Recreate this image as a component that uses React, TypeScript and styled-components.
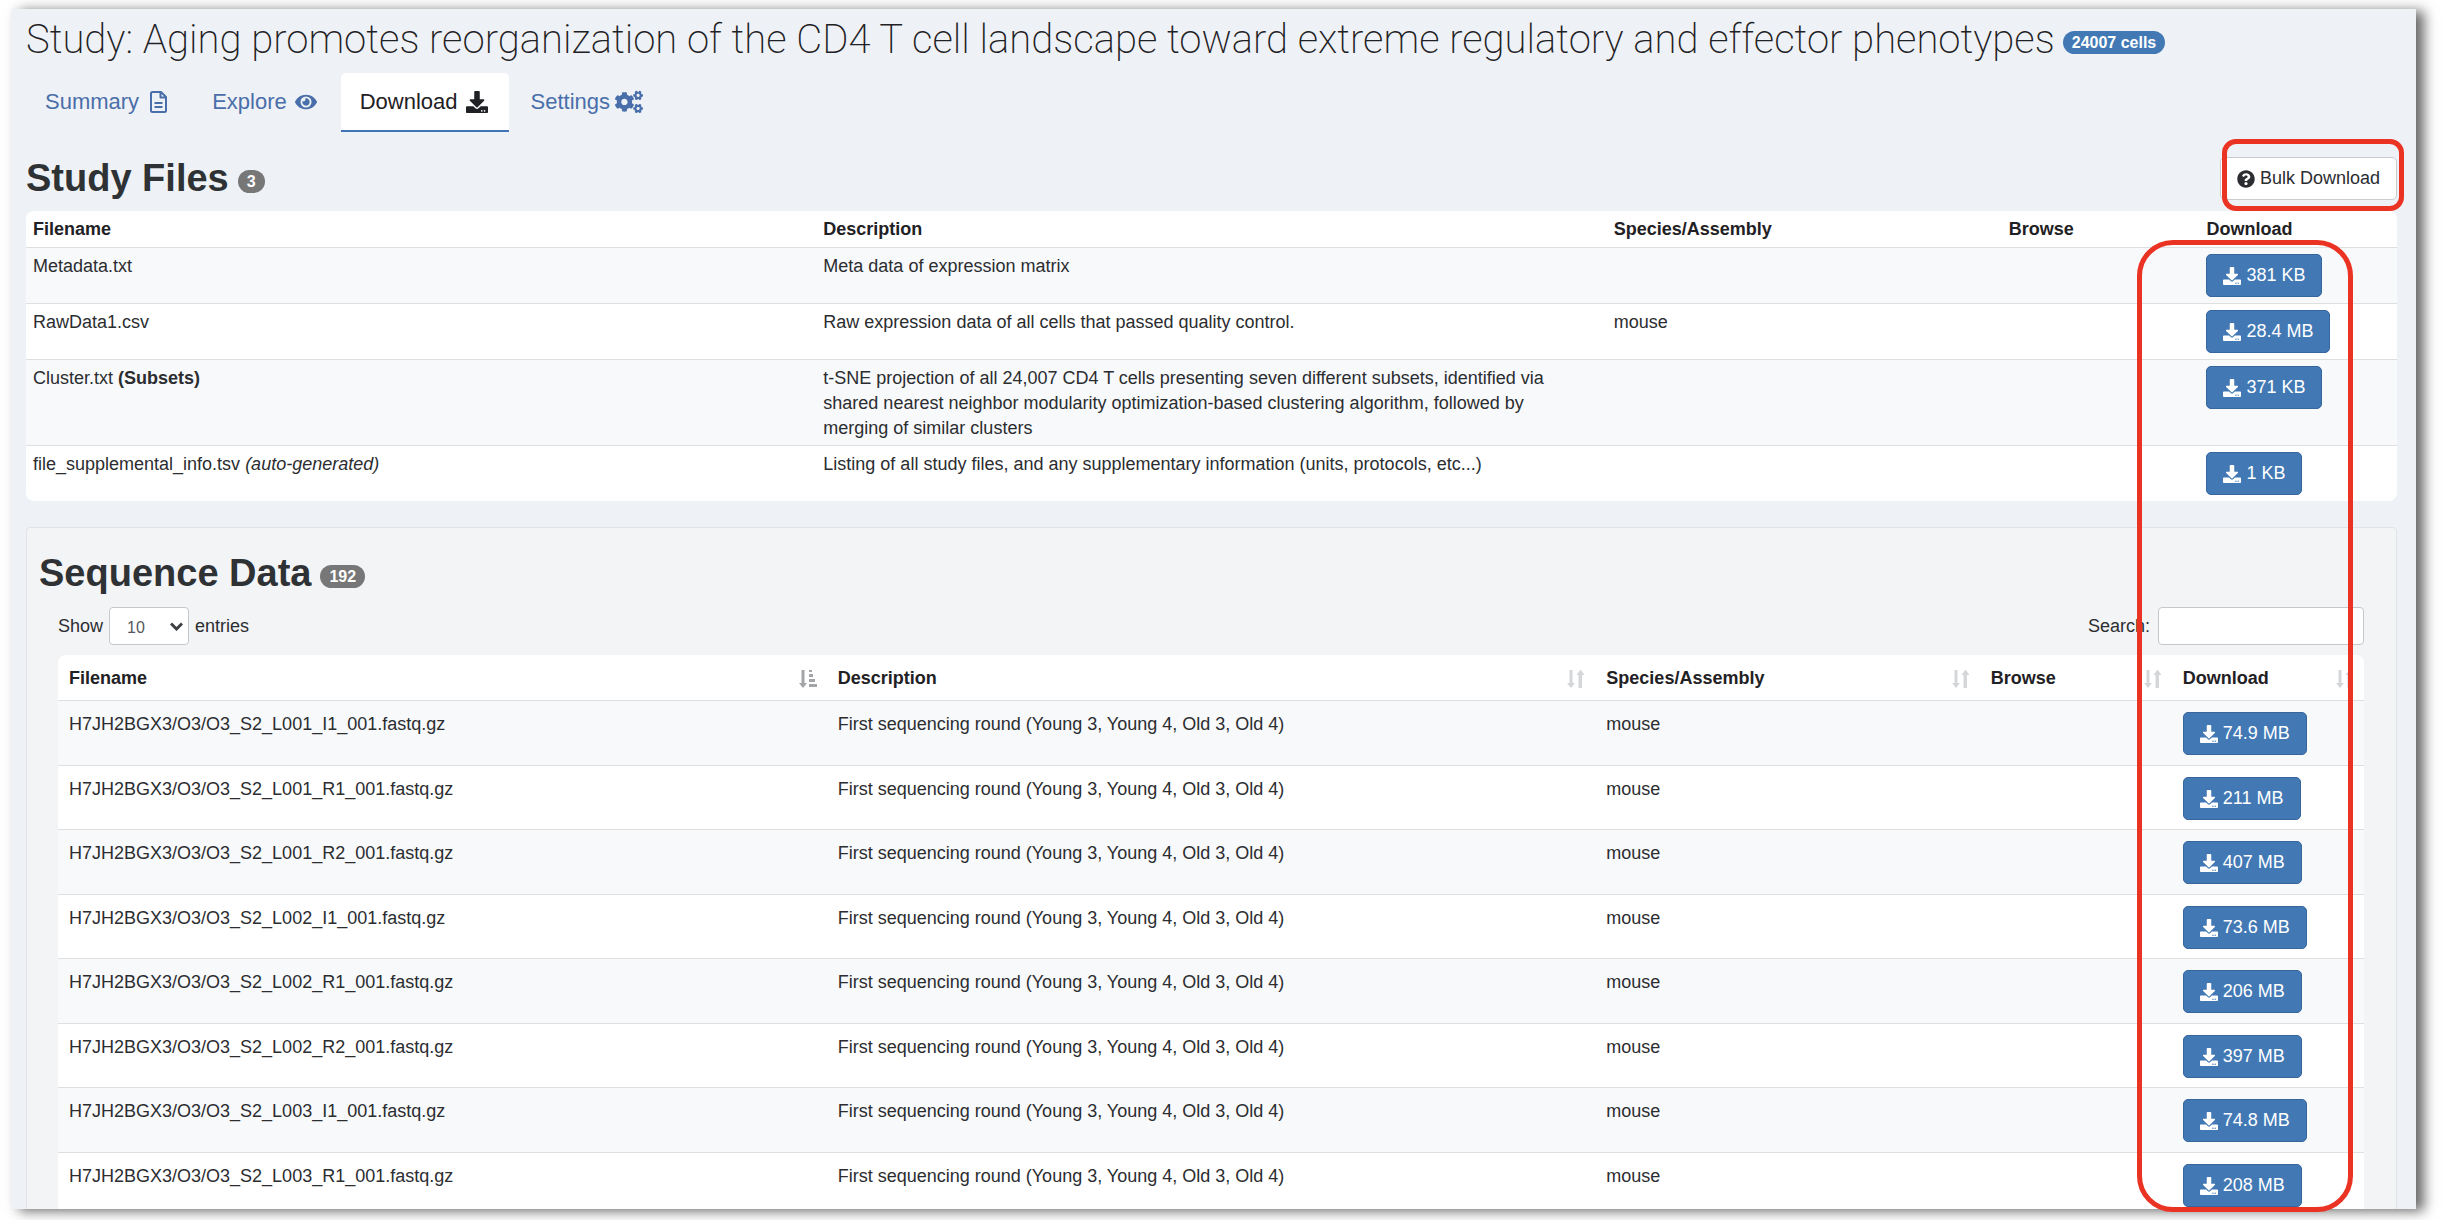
import React from "react";
import styled, { createGlobalStyle } from "styled-components";
import { FaDownload, FaEye, FaCogs, FaQuestionCircle } from "react-icons/fa";

const Global = createGlobalStyle`
  *, *::before, *::after { box-sizing: border-box; }
  body {
    margin: 0;
    background: #fff;
    color: #2b2d30;
    font-family: "Liberation Sans", Arial, sans-serif;
    font-size: 18px;
    line-height: 25px;
  }
`;

const Stage = styled.div`
  position: relative;
  height: 100vh;
  padding: 9px 26px 11px 11px;
  overflow: hidden;
`;

const Page = styled.main`
  height: 100%;
  padding: 0 19px 0 15px;
  overflow: hidden;
  background: #eef2f6;
  box-shadow: 8px 2px 12px rgba(0, 0, 0, 0.6);
`;

const Title = styled.h1`
  display: flex;
  align-items: center;
  gap: 8px;
  margin: 0;
  padding-top: 6px;
  color: #1f2124;
  font-family: Roboto, "Liberation Sans", sans-serif;
  font-size: 40px;
  font-weight: 200;
  line-height: 50px;
  white-space: nowrap;
`;

const Badge = styled.span<{ $tone?: string }>`
  margin-top: 5px;
  padding: 0 9px;
  border-radius: 12px;
  background: ${(p) => p.$tone ?? "#777"};
  color: #fff;
  font-family: "Liberation Sans", Arial, sans-serif;
  font-size: 16px;
  font-weight: 700;
  line-height: 23px;
`;

const Tabs = styled.nav`
  display: flex;
  gap: 3px;
  margin-top: 8px;
`;

const Tab = styled.a<{ $active?: boolean }>`
  display: flex;
  align-items: center;
  gap: 6px;
  height: 59px;
  padding: 0 19px;
  border-bottom: 2px solid ${(p) => (p.$active ? "#3f76b5" : "transparent")};
  border-radius: 5px 5px 0 0;
  background: ${(p) => (p.$active ? "#fff" : "transparent")};
  color: ${(p) => (p.$active ? "#1f2124" : "#4a6ea9")};
  font-size: 22px;
  text-decoration: none;
`;

const TabIcon = styled.span<{ $wide?: boolean }>`
  display: flex;
  justify-content: center;
  width: 26px;
  svg {
    flex: none;
    width: ${(p) => (p.$wide ? "28px" : "auto")};
    height: ${(p) => (p.$wide ? "28px" : "22px")};
  }
`;

const Bar = styled.div`
  display: flex;
  align-items: center;
  justify-content: space-between;
`;

const FilesBar = styled(Bar)`
  margin: 25px 0 11px;
`;

const Heading = styled.h2`
  display: flex;
  align-items: center;
  gap: 9px;
  margin: 0;
  color: #2f3235;
  font-size: 38px;
  font-weight: 700;
  line-height: 43px;
`;

const BulkWrap = styled.div`
  position: relative;
`;

const Button = styled.button<{ $plain?: boolean }>`
  display: inline-flex;
  align-items: center;
  gap: 5px;
  height: 43px;
  padding: 0 16px;
  border: 1px solid ${(p) => (p.$plain ? "#c9ccce" : "#36669b")};
  border-radius: 5px;
  background: ${(p) => (p.$plain ? "#fff" : "#4279b5")};
  color: ${(p) => (p.$plain ? "#2b2d30" : "#fff")};
  font: inherit;
  vertical-align: top;
  white-space: nowrap;
`;

const Callout = styled.div`
  position: absolute;
  border: 5px solid #ea3323;
  pointer-events: none;
`;

const BulkCallout = styled(Callout)`
  inset: -18px -7px -11px 2px;
  border-radius: 14px;
`;

const ColumnCallout = styled(Callout)`
  top: 240px;
  right: 89px;
  bottom: 8px;
  width: 216px;
  border-radius: 36px;
`;

const Table = styled.table<{ $roomy?: boolean }>`
  width: 100%;
  table-layout: fixed;
  border-collapse: separate;
  border-spacing: 0;
  border-radius: 8px;
  overflow: hidden;
  background: #fff;
  th, td {
    padding: ${(p) => (p.$roomy ? "11px 10px 9px 11px" : "6px 16px 4px 7px")};
    text-align: left;
    vertical-align: top;
  }
  th {
    height: ${(p) => (p.$roomy ? 45 : 36)}px;
    color: #1f2124;
  }
  td {
    height: ${(p) => (p.$roomy ? 64 : 56)}px;
    border-top: 1px solid #dddfe1;
  }
  tbody tr:nth-child(odd) { background: #f8f9fb; }
  ${(p) => p.$roomy && "tbody tr:nth-child(odd) td { height: 65px; }"}
`;

const Col = styled.col<{ $share: number }>`
  width: calc(100% * ${(p) => p.$share} / 12);
`;

const SortHead = styled.div`
  display: flex;
  align-items: center;
  justify-content: space-between;
`;

const Well = styled.section`
  margin-top: 26px;
  padding: 24px 32px 0 31px;
  border: 1px solid #e1e3e5;
  border-radius: 4px;
  background: #f3f4f6;
`;

const WellHeading = styled(Heading)`
  margin-left: -19px;
`;

const Controls = styled(Bar)`
  margin: 12px 0 10px;
`;

const Label = styled.label`
  display: flex;
  align-items: center;
  gap: 6px;
`;

const SelectBox = styled.span`
  position: relative;
  display: flex;
  align-items: center;
  svg { position: absolute; right: 6px; pointer-events: none; }
`;

const Select = styled.select`
  width: 80px;
  height: 38px;
  padding: 2px 17px 0;
  border: 1px solid #c5c8cb;
  border-radius: 4px;
  appearance: none;
  background: #fff;
  color: #55585c;
  font: inherit;
  font-size: 16px;
`;

const Search = styled.input`
  width: 206px;
  height: 38px;
  margin-left: 2px;
  border: 1px solid #c5c8cb;
  border-radius: 4px;
  background: #fff;
`;

const FileIcon = () => (
  <svg viewBox="0 0 17 22" fill="none" stroke="currentColor" strokeWidth="2" aria-hidden="true">
    <path d="M11 1H2.500A1.500 1.500 0 0 0 1 2.500v17A1.500 1.500 0 0 0 2.500 21h12a1.500 1.500 0 0 0 1.500-1.500V6zM10.500 1v5.500H16M4.500 12h8M4.500 16h8" strokeLinejoin="round" />
  </svg>
);

const SortIcon = ({ active }: { active?: boolean }) =>
  active ? (
    <svg width="18" height="19" viewBox="0 0 18 19" fill="#a3a5a8" aria-hidden="true">
      <path d="M2.500 1h3v13H8l-4 5-4-5h2.500zM10 1h3v2h-3zM10 5h4v3h-4zM10 10h6v3h-6zM10 15h8v3h-8z" />
    </svg>
  ) : (
    <svg width="18" height="19" viewBox="0 0 18 19" fill="#d4d6d8" aria-hidden="true">
      <path d="M2.500 1h3v13H8l-4 5-4-5h2.500zM11.500 19h3.500V6h2.500l-4-5.500L9.500 6h2z" />
    </svg>
  );

const columns = ["Filename", "Description", "Species/Assembly", "Browse", "Download"];
const shares = [4, 4, 2, 1, 1];

const studyFiles = [
  { name: <>Metadata.txt</>, text: "Meta data of expression matrix", species: "", size: "381 KB" },
  { name: <>RawData1.csv</>, text: "Raw expression data of all cells that passed quality control.", species: "mouse", size: "28.4 MB" },
  {
    name: <>Cluster.txt <strong>(Subsets)</strong></>,
    text: "t-SNE projection of all 24,007 CD4 T cells presenting seven different subsets, identified via shared nearest neighbor modularity optimization-based clustering algorithm, followed by merging of similar clusters",
    species: "",
    size: "371 KB",
  },
  {
    name: <>file_supplemental_info.tsv <em>(auto-generated)</em></>,
    text: "Listing of all study files, and any supplementary information (units, protocols, etc...)",
    species: "",
    size: "1 KB",
  },
];

const sequences = [
  ["L001_I1", "74.9 MB"],
  ["L001_R1", "211 MB"],
  ["L001_R2", "407 MB"],
  ["L002_I1", "73.6 MB"],
  ["L002_R1", "206 MB"],
  ["L002_R2", "397 MB"],
  ["L003_I1", "74.8 MB"],
  ["L003_R1", "208 MB"],
];

const Columns = () => (
  <colgroup>
    {shares.map((s, i) => <Col key={i} $share={s} />)}
  </colgroup>
);

const DownloadButton = ({ size }: { size: string }) => (
  <Button type="button"><FaDownload />{size}</Button>
);

export default function App() {
  return (
    <>
      <Global />
      <Stage>
        <Page>
          <Title>
            <span>Study: Aging promotes reorganization of the CD4 T cell landscape toward extreme regulatory and effector phenotypes</span>
            <Badge $tone="#4279b5">24007 cells</Badge>
          </Title>
          <Tabs>
            <Tab href="#summary">Summary <TabIcon><FileIcon /></TabIcon></Tab>
            <Tab href="#explore">Explore <TabIcon><FaEye /></TabIcon></Tab>
            <Tab href="#download" $active>Download <TabIcon><FaDownload /></TabIcon></Tab>
            <Tab href="#settings">Settings <TabIcon $wide><FaCogs /></TabIcon></Tab>
          </Tabs>
          <FilesBar>
            <Heading>Study Files <Badge>3</Badge></Heading>
            <BulkWrap>
              <Button type="button" $plain><FaQuestionCircle />Bulk Download</Button>
              <BulkCallout />
            </BulkWrap>
          </FilesBar>
          <Table>
            <Columns />
            <thead>
              <tr>{columns.map((c) => <th key={c}>{c}</th>)}</tr>
            </thead>
            <tbody>
              {studyFiles.map((f) => (
                <tr key={f.text}>
                  <td>{f.name}</td>
                  <td>{f.text}</td>
                  <td>{f.species}</td>
                  <td />
                  <td><DownloadButton size={f.size} /></td>
                </tr>
              ))}
            </tbody>
          </Table>
          <Well>
            <WellHeading>Sequence Data <Badge>192</Badge></WellHeading>
            <Controls>
              <Label>
                Show
                <SelectBox>
                  <Select defaultValue="10">
                    <option>10</option>
                    <option>25</option>
                    <option>50</option>
                    <option>100</option>
                  </Select>
                  <svg width="13" height="9" viewBox="0 0 13 9" fill="none" stroke="#3d4043" strokeWidth="3" aria-hidden="true">
                    <path d="M1 1.500l5.500 5.500L12 1.500" />
                  </svg>
                </SelectBox>
                entries
              </Label>
              <Label>
                Search:
                <Search type="search" />
              </Label>
            </Controls>
            <Table $roomy>
              <Columns />
              <thead>
                <tr>
                  {columns.map((c, i) => (
                    <th key={c}><SortHead>{c}<SortIcon active={i === 0} /></SortHead></th>
                  ))}
                </tr>
              </thead>
              <tbody>
                {sequences.map(([part, size]) => (
                  <tr key={part}>
                    <td>H7JH2BGX3/O3/O3_S2_{part}_001.fastq.gz</td>
                    <td>First sequencing round (Young 3, Young 4, Old 3, Old 4)</td>
                    <td>mouse</td>
                    <td />
                    <td><DownloadButton size={size} /></td>
                  </tr>
                ))}
              </tbody>
            </Table>
          </Well>
        </Page>
        <ColumnCallout />
      </Stage>
    </>
  );
}
